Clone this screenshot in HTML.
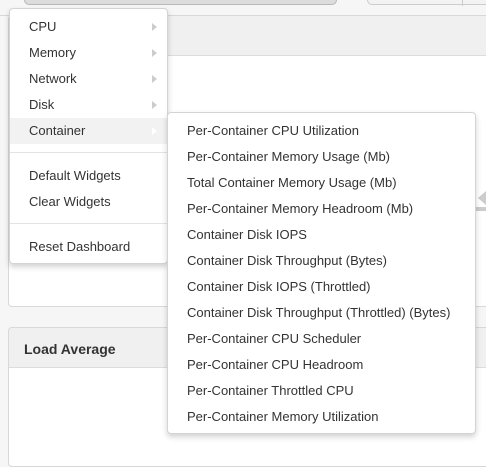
<!DOCTYPE html>
<html><head><style>
*{margin:0;padding:0;box-sizing:border-box}
body{width:486px;height:446px;overflow:hidden;background:#f6f6f6;font-family:"Liberation Sans",sans-serif;font-size:13px;color:#333;position:relative}
.abs{position:absolute}
.btn1{left:24px;top:-10px;width:313px;height:15px;background:#dcdcdc;border:1px solid #b8b8b8;border-radius:5px}
.btn2{left:367px;top:-10px;width:130px;height:15px;background:#f3f3f3;border:1px solid #ccc;border-radius:5px}
.btn2 i{position:absolute;left:94px;top:0;width:1px;height:15px;background:#ccc}
.panel{background:#fff;border:1px solid #d8d8d8;border-radius:4px;overflow:hidden}
.ph{height:40px;background:#f0f0f0;border-bottom:1px solid #ddd}
.menu{background:#fff;border:1px solid #d4d4d4;border-radius:4px;box-shadow:0 3px 6px rgba(0,0,0,.18)}
.it{position:absolute;left:0;right:0;height:26px;line-height:26px;padding-left:19px;white-space:nowrap}
.arr{position:absolute;right:10px;top:9px;width:0;height:0;border-left:5px solid #ccc;border-top:4px solid transparent;border-bottom:4px solid transparent}
.sep{position:absolute;left:0;right:0;height:1px;background:#e3e3e3}
</style></head><body>
<div class="abs btn1"></div>
<div class="abs btn2"><i></i></div>
<div class="abs" style="left:0;top:15px;width:486px;height:1px;background:#d8d8d8"></div>
<div class="abs panel" style="left:8px;top:15px;width:490px;height:292px"><div class="ph"></div></div>
<div class="abs panel" style="left:8px;top:327px;width:490px;height:140px"><div class="ph" style="padding:12px 0 0 15px;font-weight:bold;font-size:14px;color:#333;line-height:18px">Load Average</div></div>
<div class="abs" style="left:478px;top:191px;width:0;height:0;border-right:8px solid #ccc;border-top:7px solid transparent;border-bottom:7px solid transparent"></div>
<div class="abs" style="left:474px;top:207px;width:12px;height:4px;background:#ccc"></div>

<div class="abs menu" style="left:9px;top:8px;width:159px;height:256px">
<div class="it" style="top:5px">CPU<span class="arr"></span></div>
<div class="it" style="top:31px">Memory<span class="arr"></span></div>
<div class="it" style="top:57px">Network<span class="arr"></span></div>
<div class="it" style="top:83px">Disk<span class="arr"></span></div>
<div class="it" style="top:109px;background:#f2f2f2">Container<span class="arr" style="border-left-color:#fff"></span></div>
<div class="sep" style="top:143px"></div>
<div class="it" style="top:154px">Default Widgets</div>
<div class="it" style="top:180px">Clear Widgets</div>
<div class="sep" style="top:214px"></div>
<div class="it" style="top:225px">Reset Dashboard</div>
</div>

<div class="abs menu" style="left:167px;top:112px;width:309px;height:322px">
<div class="it" style="top:5px">Per-Container CPU Utilization</div>
<div class="it" style="top:31px">Per-Container Memory Usage (Mb)</div>
<div class="it" style="top:57px">Total Container Memory Usage (Mb)</div>
<div class="it" style="top:83px">Per-Container Memory Headroom (Mb)</div>
<div class="it" style="top:109px">Container Disk IOPS</div>
<div class="it" style="top:135px">Container Disk Throughput (Bytes)</div>
<div class="it" style="top:161px">Container Disk IOPS (Throttled)</div>
<div class="it" style="top:187px">Container Disk Throughput (Throttled) (Bytes)</div>
<div class="it" style="top:213px">Per-Container CPU Scheduler</div>
<div class="it" style="top:239px">Per-Container CPU Headroom</div>
<div class="it" style="top:265px">Per-Container Throttled CPU</div>
<div class="it" style="top:291px">Per-Container Memory Utilization</div>
</div>
</body></html>
